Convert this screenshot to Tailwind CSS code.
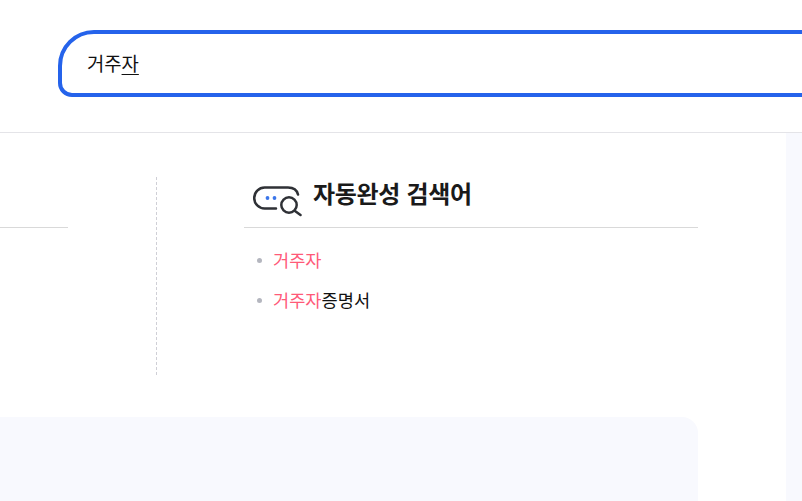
<!DOCTYPE html>
<html lang="ko">
<head>
<meta charset="utf-8">
<script src="https://cdn.jsdelivr.net/npm/@tailwindcss/browser@4"></script>
</head>
<body class="w-[802px] h-[501px] overflow-hidden bg-white font-['Noto_Sans_CJK_KR','Noto_Sans',sans-serif] text-[#111]">
<header class="h-[133px] border-b border-[#e4e4e8] pt-[30px] pl-[58px] overflow-hidden">
  <div class="w-[900px] h-[67px] border-[4px] border-[#2563eb] rounded-tl-[36px] rounded-bl-[14px] pl-[25px] flex items-center text-[18.8px] text-[#111]">
    <span>거주<span class="underline underline-offset-[3px] decoration-[#111]">자</span></span>
  </div>
</header>
<div class="flex h-[368px]">
  <main class="w-[786px] overflow-hidden">
    <div class="flex pt-[44px] h-[284px]">
      <div class="w-[68px] h-[51px] border-b border-[#d9d9d9] shrink-0"></div>
      <div class="ml-[88px] w-0 h-[198px] border-l border-dashed border-[#cfcfd6] shrink-0"></div>
      <section class="ml-[87px] w-[454px] shrink-0">
        <div class="h-[51px] border-b border-[#d9d9d9] flex items-start pl-[9px] gap-[11px]">
          <svg class="mt-[8px] shrink-0" width="49" height="32" viewBox="0 0 49 32" fill="none">
            <path d="M23 23.500H11.700C5.900 23.500 1.200 18.800 1.200 13S5.900 2.500 11.700 2.500H35C40.500 2.500 44 5 45 9.500" stroke="#2f3136" stroke-width="2.500" stroke-linecap="round"/>
            <circle cx="14.500" cy="13" r="1.900" fill="#3b76ea"/>
            <circle cx="21.500" cy="13" r="1.900" fill="#3b76ea"/>
            <circle cx="36" cy="20" r="7.700" stroke="#2f3136" stroke-width="2.500" fill="#fff"/>
            <path d="M42 26L47.500 30" stroke="#2f3136" stroke-width="2.500" stroke-linecap="round"/>
          </svg>
          <h2 class="text-[24px] leading-[32px] font-bold text-[#1a1a1a] tracking-[-0.3px]">자동완성 검색어</h2>
        </div>
        <ul class="text-[17.6px] leading-[24px] mt-[20px] flex flex-col gap-[16px]">
          <li class="flex items-center pl-[13px] gap-[11px]"><span class="w-[5px] h-[5px] rounded-full bg-[#b4b6bf]"></span><span><span class="text-[#ff5a78]">거주자</span></span></li>
          <li class="flex items-center pl-[13px] gap-[11px]"><span class="w-[5px] h-[5px] rounded-full bg-[#b4b6bf]"></span><span><span class="text-[#ff5a78]">거주자</span>증명서</span></li>
        </ul>
      </section>
    </div>
    <div class="w-[698px] h-[120px] bg-[#f8f9fe] rounded-r-[16px]"></div>
  </main>
  <aside class="w-[16px] bg-[#f8f9fe]"></aside>
</div>
</body>
</html>
